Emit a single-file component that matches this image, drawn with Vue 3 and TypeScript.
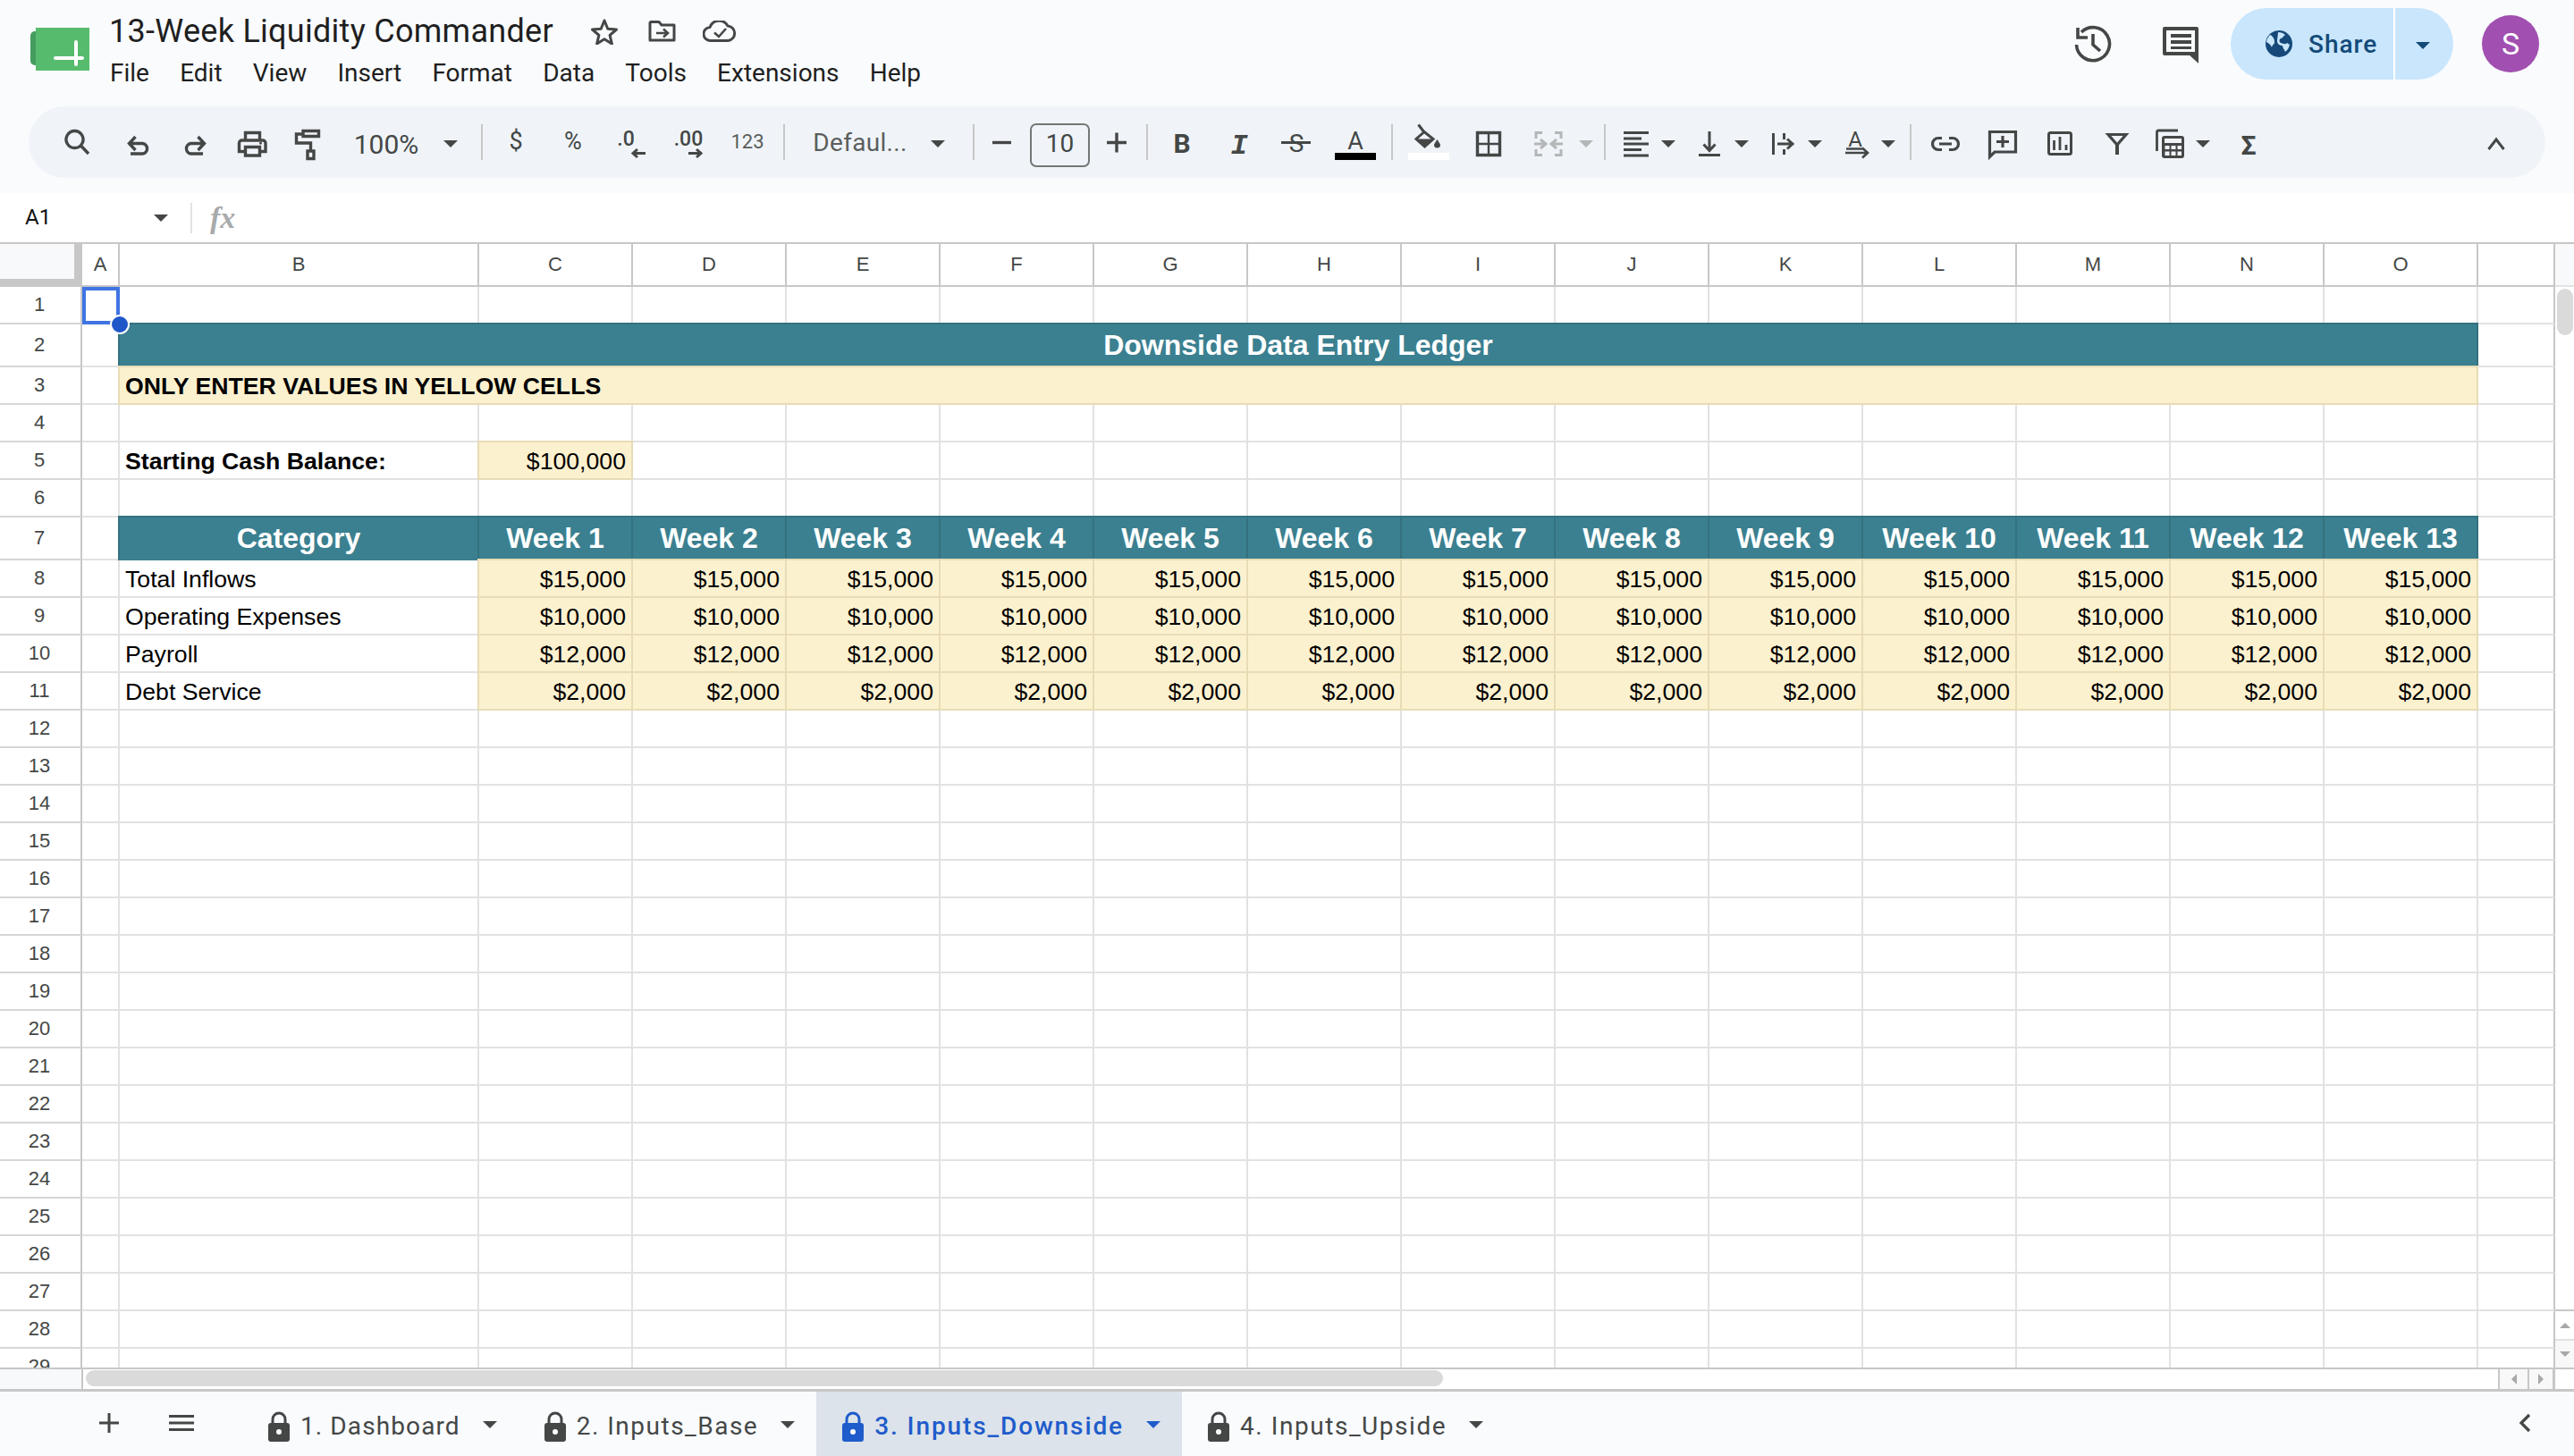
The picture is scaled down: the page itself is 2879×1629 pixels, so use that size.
<script setup lang="ts">
import { computed } from 'vue'

interface Cell { key: string; cls: string; text?: string; style?: string; sel?: boolean }
interface Shape { d: string; sw?: number; fill?: string; stroke?: string }
interface Txt { x: number; y: number; s: string; cls: string }
interface Item { c: number; w: number; div?: boolean; shapes?: Shape[]; texts?: Txt[] }

const columns = ['A', 'B', 'C', 'D', 'E', 'F', 'G', 'H', 'I', 'J', 'K', 'L', 'M', 'N', 'O', '']
const menus = ['File', 'Edit', 'View', 'Insert', 'Format', 'Data', 'Tools', 'Extensions', 'Help']
const ledger: Record<number, [string, string]> = {
  8: ['Total Inflows', '$15,000'],
  9: ['Operating Expenses', '$10,000'],
  10: ['Payroll', '$12,000'],
  11: ['Debt Service', '$2,000'],
}

const cells = computed<Cell[]>(() => {
  const out: Cell[] = []
  for (let r = 1; r <= 29; r++) {
    out.push({ key: `h${r}`, cls: 'rowhead', text: String(r) })
    out.push({ key: `a${r}`, cls: 'cell', sel: r === 1 })
    if (r === 2) {
      out.push({ key: 'title', cls: 'cell teal title', text: 'Downside Data Entry Ledger', style: 'grid-column: span 14' })
    } else if (r === 3) {
      out.push({ key: 'warn', cls: 'cell yellow bold', text: 'ONLY ENTER VALUES IN YELLOW CELLS', style: 'grid-column: span 14' })
    } else {
      for (let c = 0; c < 14; c++) {
        const k = `c${r}-${c}`
        if (r === 5 && c === 0) out.push({ key: k, cls: 'cell bold', text: 'Starting Cash Balance:' })
        else if (r === 5 && c === 1) out.push({ key: k, cls: 'cell yellow num', text: '$100,000' })
        else if (r === 7) out.push({ key: k, cls: 'cell teal title', text: c === 0 ? 'Category' : `Week ${c}` })
        else if (ledger[r] && c === 0) out.push({ key: k, cls: 'cell', text: ledger[r][0] })
        else if (ledger[r]) out.push({ key: k, cls: 'cell yellow num', text: ledger[r][1] })
        else out.push({ key: k, cls: 'cell' })
      }
    }
    out.push({ key: `p${r}`, cls: 'cell lastcol' })
  }
  return out
})

const tri = (c: number, y = 161, color?: string): Shape => ({ d: `M${c - 8} ${y - 4}h16l-8 8z`, fill: color || '#444746', sw: 0 })

const items: Item[] = [
  { c: 86, w: 32, shapes: [{ d: 'M83.5 146.5a9.5 9.5 0 1 0 .01 0zM90.5 163L99 172' }] },
  { c: 155, w: 28, shapes: [{ d: 'M151.5 153L144.5 160.5L151.5 168M144.5 160.5H159.5A5.8 5.8 0 0 1 159.5 172H146' }] },
  { c: 218, w: 28, shapes: [{ d: 'M221.5 153L228.5 160.5L221.5 168M228.5 160.5H213.5A5.8 5.8 0 0 0 213.5 172H227' }] },
  { c: 282, w: 36, shapes: [
    { d: 'M274.5 157V148.5H290.5V157M273 169.5H267.5V160A3 3 0 0 1 270.5 157H294A3 3 0 0 1 297 160V169.5H291M274.5 164.5H290.5V174H274.5Z' },
    { d: 'M291.5 158.7a1.5 1.5 0 1 0 .01 0z', fill: '#444746', sw: 0 },
  ] },
  { c: 344, w: 32, shapes: [{ d: 'M339 146.5H356.5V152.5H339ZM338 150H331.5V160H347.5V168M344 169H351V177.5H344Z' }] },
  { c: 432, w: 80, texts: [{ x: 432, y: 172, s: '100%', cls: 'tt t30 mid' }] },
  { c: 504, w: 20, shapes: [tri(504)] },
  { c: 539, w: 2, div: true },
  { c: 577, w: 30, texts: [{ x: 577, y: 167, s: '$', cls: 'tt t26 mid' }] },
  { c: 641, w: 40, texts: [{ x: 641, y: 167, s: '%', cls: 'tt t26 mid' }] },
  { c: 703, w: 40, texts: [{ x: 700, y: 163, s: '.0', cls: 'tt t22 mid' }], shapes: [{ d: 'M722 171.5H708M713 167L708 171.5L713 176', sw: 3 }] },
  { c: 770, w: 44, texts: [{ x: 770, y: 163, s: '.00', cls: 'tt t22 mid' }], shapes: [{ d: 'M770 171.5H784M779 167L784 171.5L779 176', sw: 3 }] },
  { c: 836, w: 44, texts: [{ x: 836, y: 166, s: '123', cls: 'tt t21 mid' }] },
  { c: 877, w: 2, div: true },
  { c: 962, w: 120, texts: [{ x: 962, y: 169, s: 'Defaul...', cls: 'tt t28 mid dim' }] },
  { c: 1049, w: 20, shapes: [tri(1049)] },
  { c: 1089, w: 2, div: true },
  { c: 1120, w: 24, shapes: [{ d: 'M1110 159.5H1131' }] },
  { c: 1185.5, w: 67, texts: [{ x: 1185.5, y: 170, s: '10', cls: 'tt t28 mid' }], shapes: [{ d: 'M1159 139H1212a6 6 0 0 1 6 6V180a6 6 0 0 1-6 6H1159a6 6 0 0 1-6-6V145a6 6 0 0 1 6-6Z', sw: 2, stroke: '#747775' }] },
  { c: 1249, w: 24, shapes: [{ d: 'M1238 159.5H1260M1249 148.5V170.5' }] },
  { c: 1283, w: 2, div: true },
  { c: 1322, w: 24, texts: [{ x: 1322, y: 171, s: 'B', cls: 'tt bb mid' }] },
  { c: 1386, w: 26, texts: [{ x: 1386, y: 172, s: 'I', cls: 'tt ii mid' }] },
  { c: 1450, w: 36, texts: [{ x: 1450, y: 170, s: 'S', cls: 'tt t28 mid' }], shapes: [{ d: 'M1433 159.5H1466', sw: 3 }] },
  { c: 1516, w: 46, texts: [{ x: 1516, y: 167, s: 'A', cls: 'tt t26 mid' }], shapes: [{ d: 'M1493 171H1539V179H1493Z', fill: '#000000', sw: 0 }] },
  { c: 1557, w: 2, div: true },
  { c: 1598, w: 46, shapes: [
    { d: 'M1586.5 139.5L1593 148M1593 147.5L1584 155.5L1593.5 164L1603 155.5Z', sw: 3 },
    { d: 'M1584.5 155.5H1603L1593.5 164.5Z', fill: '#444746', sw: 0 },
    { d: 'M1607.5 156C1605 160 1604 161 1604 162a3.5 3.5 0 0 0 7 0C1611 161 1610 160 1607.5 156Z', fill: '#444746', sw: 0 },
    { d: 'M1575 171H1621V179H1575Z', fill: '#ffffff', sw: 0 },
  ] },
  { c: 1665, w: 30, shapes: [
    { d: 'M1652.5 148.5H1677.5V173.5H1652.5Z', sw: 3.4 },
    { d: 'M1665 149V173M1653 161H1677', sw: 2.4 },
  ] },
  { c: 1732, w: 34, shapes: [{ d: 'M1718 155V148.5H1725M1739 148.5H1746V155M1718 167V173.5H1725M1746 167V173.5H1739M1716 161H1728M1723 156L1729 161L1723 166M1748 161H1736M1741 156L1735 161L1741 166', stroke: '#b4b6b7', sw: 3 }] },
  { c: 1774, w: 20, shapes: [tri(1774, 161, '#b4b6b7')] },
  { c: 1795, w: 2, div: true },
  { c: 1830, w: 30, shapes: [{ d: 'M1816 148.5H1844M1816 155H1836M1816 161H1844M1816 167.5H1836M1816 174H1844', sw: 2.8 }] },
  { c: 1866, w: 20, shapes: [tri(1866)] },
  { c: 1912, w: 26, shapes: [{ d: 'M1912 147V168M1905.5 161.5L1912 168.5L1918.5 161.5', sw: 3 }, { d: 'M1900 172H1924V175H1900Z', fill: '#444746', sw: 0 }] },
  { c: 1948, w: 20, shapes: [tri(1948)] },
  { c: 1994, w: 26, shapes: [{ d: 'M1983.5 149V173M1995.5 149V156M1995.5 167V173M1988 161H2005M1999 155.5L2005 161L1999 166.5', sw: 3 }] },
  { c: 2030, w: 20, shapes: [tri(2030)] },
  { c: 2077, w: 30, texts: [{ x: 2075, y: 164, s: 'A', cls: 'tt t24 mid' }], shapes: [{ d: 'M2065 166.5H2085M2064 171H2088M2083 165.5L2089 171L2083 176.5', sw: 2.6 }] },
  { c: 2112, w: 20, shapes: [tri(2112)] },
  { c: 2137, w: 2, div: true },
  { c: 2176, w: 36, shapes: [{ d: 'M2172 154.5H2168a6.5 6.5 0 0 0 0 13H2172M2180 154.5H2184a6.5 6.5 0 0 1 0 13H2180M2169 161H2183', sw: 3.2 }] },
  { c: 2240, w: 36, shapes: [{ d: 'M2225.5 147.5H2254.5V170H2231L2225.5 175.5ZM2240 152V165M2233 158.5H2247', sw: 3.2 }] },
  { c: 2304, w: 32, shapes: [{ d: 'M2293.5 148.5H2314.5a2 2 0 0 1 2 2V170.5a2 2 0 0 1-2 2H2293.5a2 2 0 0 1-2-2V150.5a2 2 0 0 1 2-2Z', sw: 3 }, { d: 'M2297.5 157V168M2304 153V168M2311 162V168', sw: 2.8 }] },
  { c: 2368, w: 30, shapes: [{ d: 'M2358 150.5H2378L2368 162Z', sw: 3.2 }, { d: 'M2368 162V173', sw: 4 }] },
  { c: 2427, w: 36, shapes: [
    { d: 'M2412.5 169V148a2 2 0 0 1 2-2H2436', sw: 2.8 },
    { d: 'M2421 152H2440a3 3 0 0 1 3 3V174a3 3 0 0 1-3 3H2421a3 3 0 0 1-3-3V155a3 3 0 0 1 3-3Z', fill: '#444746', sw: 0 },
    { d: 'M2421 155H2440V160H2421ZM2421.5 163H2426.5V167H2421.5ZM2428.5 163H2433.5V167H2428.5ZM2435.5 163H2440V167H2435.5ZM2421.5 169.5H2426.5V174H2421.5ZM2428.5 169.5H2433.5V174H2428.5ZM2435.5 169.5H2440V174H2435.5Z', fill: '#f0f4f9', sw: 0 },
  ] },
  { c: 2464, w: 20, shapes: [tri(2464)] },
  { c: 2515, w: 26, texts: [{ x: 2515, y: 173, s: 'Σ', cls: 'tt bb mid' }] },
  { c: 2792, w: 24, shapes: [{ d: 'M2783.5 167L2792 156L2800.5 167', sw: 3 }] },
]

const placed = computed(() => {
  let end = 32
  return items.map((it, i) => {
    const x0 = it.c - it.w / 2
    const ml = x0 - end
    end = x0 + it.w
    return { ...it, i, ml, vb: `${x0} 119 ${it.w} 80` }
  })
})

const tabs = [
  { name: '1. Dashboard', active: false, track: 1.1 },
  { name: '2. Inputs_Base', active: false, track: 1.5 },
  { name: '3. Inputs_Downside', active: true, track: 1.9 },
  { name: '4. Inputs_Upside', active: false, track: 1.55 },
]
</script>

<template>
  <div class="app">
    <header class="top">
      <div class="titlebar">
        <svg class="logo" width="68" height="50" viewBox="32 30 68 50">
          <path d="M40 35h-1a5 5 0 0 0-5 5v28a5 5 0 0 0 5 5h1z" fill="#469c5e" />
          <rect x="40" y="31" width="60" height="48" fill="#57bb6d" />
          <path d="M62 65H92M85 47V72" stroke="#fff" stroke-width="4" stroke-linecap="round" fill="none" />
        </svg>
        <div class="titleblock">
          <div class="docline">
            <span class="doc">13-Week Liquidity Commander</span>
            <svg class="ic star" width="32" height="30" viewBox="660 21 32 30">
              <path d="M676 24l3.8 9.2 9.7.8-7.4 6.4 2.3 9.6-8.4-5.2-8.4 5.2 2.3-9.6-7.4-6.4 9.7-.8z" fill="none" stroke="#444746" stroke-width="3" stroke-linejoin="round" />
            </svg>
            <svg class="ic folder" width="32" height="26" viewBox="725 24 32 26">
              <path d="M727 47V28a1.5 1.5 0 0 1 1.5-1.5H737l3 3.5H754V47Z" fill="none" stroke="#444746" stroke-width="3" stroke-linejoin="round" />
              <path d="M734 39H746M742 34.5L747 39L742 43.5" fill="none" stroke="#444746" stroke-width="2.6" />
            </svg>
            <svg class="ic cloud" width="38" height="24" viewBox="786 24 38 24">
              <path d="M795 46.5a7.5 7.5 0 0 1-1-15A11 11 0 0 1 814 30a8.3 8.3 0 0 1 .5 16.5Z" fill="none" stroke="#444746" stroke-width="3" stroke-linejoin="round" />
              <path d="M799 37.5L804 42L812 33" fill="none" stroke="#444746" stroke-width="2.6" />
            </svg>
          </div>
          <nav class="menus"><span v-for="m in menus" :key="m">{{ m }}</span></nav>
        </div>
        <div class="actions">
          <svg class="history" width="44" height="44" viewBox="2320 27 44 44">
            <path d="M2329 36A18.5 18.5 0 1 1 2323.5 50" fill="none" stroke="#444746" stroke-width="3.6" />
            <path d="M2325 31V42H2336" fill="none" stroke="#444746" stroke-width="3.6" />
            <path d="M2342 38V50L2350 57" fill="none" stroke="#444746" stroke-width="3.6" />
          </svg>
          <svg class="comment" width="42" height="42" viewBox="2419 30 42 42">
            <path d="M2422 32H2458V60H2422Z" fill="none" stroke="#444746" stroke-width="4" stroke-linejoin="round" />
            <path d="M2448 60L2460 71V60Z" fill="#444746" />
            <path d="M2429 38H2452V42H2429ZM2429 45H2452V49H2429ZM2429 52H2452V55H2429Z" fill="#444746" />
          </svg>
          <div class="share">
            <div class="share-main">
              <svg width="32" height="32" viewBox="0 0 32 32">
                <circle cx="16" cy="16" r="15" fill="#16497a" />
                <path d="M6 6c3 1 5 4 5 8 0 3-2 2-3 6-1-3-4-5-6-6 0-3 2-6 4-8zM15 3c3 0 6 1 8 3-2 1-3 4-5 4-2 1-2 4 0 5 3 1 6 2 7 0l3 2c-1 3-2 6-5 8-1-3-3-4-3-7-3 0-6-2-6-5s1-7 1-10z" fill="#c9e6fd" />
              </svg>
              <span>Share</span>
            </div>
            <div class="share-more"><i class="sharetri"></i></div>
          </div>
          <div class="avatar">S</div>
        </div>
      </div>
      <div class="tb">
        <template v-for="it in placed" :key="it.i">
          <span v-if="it.div" class="tdiv" :style="{ marginLeft: it.ml + 'px' }"></span>
          <svg v-else class="ti" :width="it.w" height="80" :viewBox="it.vb" :style="{ marginLeft: it.ml + 'px' }">
            <path
              v-for="(s, j) in it.shapes || []"
              :key="j"
              :d="s.d"
              :fill="s.fill || 'none'"
              :stroke="s.sw === 0 ? 'none' : s.stroke || '#444746'"
              :stroke-width="s.sw === undefined ? 3.4 : s.sw"
            />
            <text v-for="(t, j) in it.texts || []" :key="'t' + j" :x="t.x" :y="t.y" :class="t.cls">{{ t.s }}</text>
          </svg>
        </template>
      </div>
    </header>

    <div class="formula">
      <span class="ref">A1</span>
      <i class="reftri"></i>
      <span class="fdiv"></span>
      <span class="fx">fx</span>
    </div>

    <div class="sheetwrap">
      <div class="grid">
        <div class="corner"></div>
        <div v-for="c in columns" :key="c" class="colhead" :class="{ lastcol: c === '' }">{{ c }}</div>
        <div v-for="c in cells" :key="c.key" :class="c.cls" :style="c.style">
          <span v-if="c.text">{{ c.text }}</span>
          <div v-if="c.sel" class="selection"><i class="handle"></i></div>
        </div>
      </div>
      <div class="vscroll">
        <div class="vhead"></div>
        <div class="vthumb"></div>
        <div class="vbtns">
          <div class="vbtn up"><i class="sc-up"></i></div>
          <div class="vbtn down"><i class="sc-down"></i></div>
        </div>
      </div>
    </div>

    <div class="hscroll">
      <div class="hleft"></div>
      <div class="hthumb"></div>
      <div class="hbtn"><i class="sc-left"></i></div>
      <div class="hbtn second"><i class="sc-right"></i></div>
    </div>

    <footer class="tabbar">
      <svg class="plus" width="22" height="22" viewBox="0 0 22 22">
        <path d="M0 11H22M11 0V22" stroke="#444746" stroke-width="3" fill="none" />
      </svg>
      <svg class="burger" width="28" height="18" viewBox="0 0 28 18">
        <path d="M0 1.5H28M0 9H28M0 16.5H28" stroke="#444746" stroke-width="3" fill="none" />
      </svg>
      <div class="tabs">
        <div v-for="t in tabs" :key="t.name" class="tab" :class="{ active: t.active }">
          <svg class="lock" width="24" height="34" viewBox="0 0 24 34">
            <path d="M5 15V9a7 7 0 0 1 14 0V15" fill="none" stroke="currentColor" stroke-width="3" />
            <rect x="0" y="13" width="24" height="21" rx="3" fill="currentColor" />
            <circle cx="12" cy="23" r="3" fill="#fff" />
          </svg>
          <span class="tabname" :style="{ letterSpacing: t.track + 'px' }">{{ t.name }}</span>
          <i class="tabtri"></i>
        </div>
      </div>
      <svg class="chev" width="14" height="22" viewBox="0 0 14 22">
        <path d="M12 2L3 11L12 20" stroke="#444746" stroke-width="3.2" fill="none" />
      </svg>
    </footer>
  </div>
</template>

<style>
html, body { margin: 0; background: #fff; overflow: hidden; }
</style>

<style scoped>
.app {
  width: 2879px;
  height: 1629px;
  display: flex;
  flex-direction: column;
  overflow: hidden;
  font-family: Roboto, "Liberation Sans", sans-serif;
  background: #fff;
}
.top { height: 216px; flex: none; background: #f9fbfd; box-sizing: border-box; }
.titlebar { height: 119px; display: flex; }
.logo { margin: 30px 0 0 32px; flex: none; }
.titleblock { margin-left: 22px; display: flex; flex-direction: column; }
.docline { height: 36px; margin-top: 17px; display: flex; align-items: center; }
.doc { font-size: 36px; line-height: 36px; letter-spacing: .28px; color: #1f1f1f; white-space: nowrap; width: 538px; }
.ic { flex: none; }
.star { margin-right: 33px; }
.folder { margin-right: 29px; }
.menus { display: flex; gap: 34.2px; margin-top: 12px; font-size: 28px; line-height: 34px; color: #1f1f1f; padding-left: 1px; }
.actions { margin-left: auto; display: flex; align-items: flex-start; }
.history { margin-top: 27px; }
.comment { margin: 30px 0 0 55px; }
.share { margin: 9px 0 0 35px; width: 249px; height: 80px; display: flex; border-radius: 40px; overflow: hidden; background: #c9e6fd; }
.share-main { width: 182px; display: flex; align-items: center; padding-left: 38px; box-sizing: border-box; gap: 17px; font-size: 28px; font-weight: 500; letter-spacing: 1px; color: #134a78; }
.share-more { flex: 1; border-left: 2px solid #fff; display: flex; align-items: center; justify-content: center; padding-right: 3px; padding-top: 3px; }
.sharetri { width: 0; height: 0; border-left: 8px solid transparent; border-right: 8px solid transparent; border-top: 8px solid #134a78; }
.avatar { width: 64px; height: 64px; margin: 17px 39px 0 32px; border-radius: 50%; background: #a14fb0; color: #fff; font-size: 34px; display: flex; align-items: center; justify-content: center; }

.tb { margin-left: 32px; width: 2815px; height: 80px; border-radius: 40px; background: #f0f4f9; display: flex; align-items: center; }
.ti { flex: none; overflow: visible; display: block; }
.tdiv { flex: none; width: 2px; height: 40px; background: #c7c7c7; }
.tt { fill: #444746; font-family: Roboto, "Liberation Sans", sans-serif; }
.mid { text-anchor: middle; }
.t30 { font-size: 30px; }
.t28 { font-size: 28px; }
.t26 { font-size: 27px; }
.t24 { font-size: 24px; }
.t22 { font-size: 23px; font-weight: 500; }
.t21 { font-size: 22px; fill: #5a5d5b; }
.dim { fill: #5b5e5d; letter-spacing: .3px; }
.bb { font-size: 30px; font-weight: 700; font-family: Roboto, sans-serif; }
.ii { font-size: 32px; font-weight: 700; font-style: italic; font-family: "Liberation Mono", monospace; }

.formula { height: 55px; flex: none; background: #fff; display: flex; align-items: center; }
.ref { margin-left: 28px; margin-top: -2px; font-size: 24px; color: #111; width: 144px; }
.reftri { width: 0; height: 0; border-left: 8px solid transparent; border-right: 8px solid transparent; border-top: 8px solid #444746; }
.fdiv { width: 2px; height: 34px; margin-left: 25px; background: #e0e3e6; }
.fx { margin-left: 20px; font-family: "Liberation Serif", serif; font-style: italic; font-weight: 700; font-size: 34px; color: #a8aaab; }

.sheetwrap { height: 1259px; flex: none; display: flex; overflow: hidden; }
.grid {
  width: 2858px;
  flex: none;
  box-sizing: border-box;
  display: grid;
  grid-template-columns: 92px 42px 402px repeat(13, 172px) 86px;
  grid-template-rows: 50px 42px 48px 42px 42px 42px 42px 48px repeat(22, 42px);
  overflow: hidden;
  font-family: "Liberation Sans", Arial, sans-serif;
  font-size: 26.67px;
  color: #000;
}
.corner {
  background: #f8f9fa;
  border-top: 2px solid #c7c7c7;
  border-right: 9px solid #c7c7c7;
  border-bottom: 9px solid #c7c7c7;
  box-sizing: border-box;
}
.colhead {
  border-top: 2px solid #c7c7c7;
  border-right: 2px solid #c7c7c7;
  border-bottom: 2px solid #c7c7c7;
  box-sizing: border-box;
  display: flex;
  align-items: center;
  justify-content: center;
  font-size: 22px;
  color: #444746;
  background: #fff;
}
.rowhead {
  border-right: 2px solid #c7c7c7;
  border-bottom: 2px solid #d6d6d6;
  box-sizing: border-box;
  display: flex;
  align-items: center;
  justify-content: center;
  font-size: 22px;
  color: #444746;
  padding-right: 2px;
  padding-bottom: 1px;
  background: #fff;
}
.cell {
  border-right: 2px solid #e2e2e2;
  border-bottom: 2px solid #e2e2e2;
  box-sizing: border-box;
  display: flex;
  align-items: flex-end;
  padding: 0 6px 1px 6px;
  line-height: 36px;
  white-space: nowrap;
  position: relative;
  min-width: 0;
}
.lastcol { border-right-color: #c7c7c7; }
.bold { font-weight: 700; }
.num { justify-content: flex-end; }
.yellow {
  margin: -2px 0 0 -2px;
  background: #fcf1cf;
  border: 2px solid #e8dcb6;
  padding: 0 6px 1px 6px;
}
.teal {
  margin: -2px 0 0 -2px;
  background: #3b8090;
  border: 2px solid #34727f;
  border-bottom-color: #3b8090;
  color: #fff;
  justify-content: center;
  align-items: center;
  padding: 0;
}
.title { font-weight: 700; font-size: 32px; }
.selection {
  position: absolute;
  left: 0;
  top: 0;
  width: 42px;
  height: 42px;
  border: 4px solid #3f74e2;
  box-sizing: border-box;
  z-index: 3;
}
.handle {
  position: absolute;
  right: -15px;
  bottom: -15px;
  width: 18px;
  height: 18px;
  border-radius: 50%;
  background: #1f57c9;
  border: 2px solid #fff;
}

.vscroll { flex: 1; display: flex; flex-direction: column; background: #fff; }
.vhead { height: 50px; background: #f8f9fa; box-sizing: border-box; border-top: 2px solid #c7c7c7; border-bottom: 2px solid #e2e2e2; flex: none; }
.vthumb { width: 18px; height: 52px; margin: 2px 0 0 2px; border-radius: 9px; background: #dadada; flex: none; }
.vbtns { margin-top: auto; flex: none; }
.vbtn { height: 31px; display: flex; align-items: center; justify-content: center; }
.vbtn.up { border-top: 2px solid #c7c7c7; background: #fff; }
.vbtn.down { border-top: 2px solid #e2e2e2; background: #f8f8f8; height: 32px; box-sizing: border-box; }
.sc-up, .sc-down, .sc-left, .sc-right { width: 0; height: 0; display: block; }
.sc-up { border-left: 6px solid transparent; border-right: 6px solid transparent; border-bottom: 6px solid #a8a8a8; }
.sc-down { border-left: 6px solid transparent; border-right: 6px solid transparent; border-top: 6px solid #a8a8a8; }
.sc-left { border-top: 6px solid transparent; border-bottom: 6px solid transparent; border-right: 6px solid #a8a8a8; }
.sc-right { border-top: 6px solid transparent; border-bottom: 6px solid transparent; border-left: 6px solid #a8a8a8; }

.hscroll { height: 27px; flex: none; box-sizing: border-box; border-top: 2px solid #c7c7c7; border-bottom: 3px solid #c7c7c7; display: flex; background: #fff; }
.hleft { width: 93px; background: #f8f9fa; border-right: 2px solid #c7c7c7; box-sizing: border-box; height: 22px; flex: none; }
.hthumb { width: 1518px; height: 18px; margin: 1px 1180px 0 3px; border-radius: 9px; background: #dadada; flex: none; }
.hbtn { width: 33px; height: 22px; border-left: 2px solid #c7c7c7; box-sizing: border-box; display: flex; align-items: center; justify-content: center; background: #f8f8f8; flex: none; }
.hbtn.second { width: 31px; border-right: 3px solid #c7c7c7; }

.tabbar { flex: 1; background: #f9fbfd; display: flex; align-items: center; color: #444746; }
.plus { margin-left: 111px; flex: none; margin-top: -3px; }
.burger { margin-left: 56px; flex: none; margin-top: -3px; }
.tabs { display: flex; margin-left: 54px; align-self: stretch; }
.tab { display: flex; align-items: center; padding: 0 24px 0 29px; font-size: 28px; color: #444746; }
.tab.active { background: #dde3ea; color: #1f5ccb; font-weight: 500; }
.lock { flex: none; margin-top: 6px; }
.tabname { margin-left: 12px; white-space: nowrap; padding-top: 5px; }
.tabtri { margin-left: 25px; margin-top: 2px; width: 0; height: 0; border-left: 8px solid transparent; border-right: 8px solid transparent; border-top: 8px solid currentColor; }
.chev { margin-left: auto; margin-right: 48px; flex: none; margin-top: -3px; }
</style>
